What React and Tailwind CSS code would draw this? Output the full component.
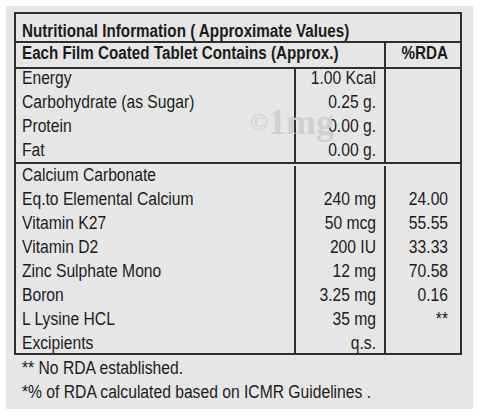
import React from 'react';

const group1 = [
    ['Energy', '1.00 Kcal', ''],
    ['Carbohydrate (as Sugar)', '0.25 g.', ''],
    ['Protein', '0.00 g.', ''],
    ['Fat', '0.00 g.', ''],
];

const group2 = [
    ['Calcium Carbonate', '', ''],
    ['Eq.to Elemental Calcium', '240 mg', '24.00'],
    ['Vitamin K27', '50 mcg', '55.55'],
    ['Vitamin D2', '200 IU', '33.33'],
    ['Zinc Sulphate Mono', '12 mg', '70.58'],
    ['Boron', '3.25 mg', '0.16'],
    ['L Lysine HCL', '35 mg', '**'],
    ['Excipients', 'q.s.', ''],
];

// narrow text: Arial-width font squeezed to an Arial Narrow look
const N = ({ children, right, bold }) => (
    <span
        className={`inline-block whitespace-nowrap ${bold ? 'font-bold scale-x-[0.845]' : 'scale-x-[0.87]'} ${right ? 'origin-right' : 'origin-left'}`}
    >
        {children}
    </span>
);

const Group = ({ rows, className }) => (
    <div className={`flex ${className}`}>
        <div className="w-[278px] pl-[6px]">
            {rows.map((r) => (
                <div key={r[0]} className="h-[24px]"><N>{r[0]}</N></div>
            ))}
        </div>
        <div className="w-[90px] border-l-2 border-[#2e2e2e] pr-[8px] text-right">
            {rows.map((r) => (
                <div key={r[0]} className="h-[24px]"><N right>{r[1]}</N></div>
            ))}
        </div>
        <div className="flex-1 border-l-2 border-[#2e2e2e] pr-[12px] text-right">
            {rows.map((r) => (
                <div key={r[0]} className="h-[24px]"><N right>{r[2]}</N></div>
            ))}
        </div>
    </div>
);

const App = () => {
    return (
        <div className="w-[480px] h-[416px] bg-white pt-[6px] pl-[6px]">
            <div className="relative w-[467px] h-[403px] bg-[#e6e6e6] pt-[6px] pl-[8px] text-[18px] leading-[18px] text-[#1c1c1c] font-['Liberation_Sans',Arial,sans-serif]">
                {/* ── table ─────────────────── */}
                <div className="w-[448px] border-2 border-[#2e2e2e]">
                    <div className="h-[29px] pt-[8px] pl-[6px] border-b-2 border-[#2e2e2e]">
                        <N bold>Nutritional Information ( Approximate Values)</N>
                    </div>
                    <div className="flex h-[26px] border-b-2 border-[#2e2e2e]">
                        <div className="w-[368px] pt-[1px] pl-[6px]">
                            <N bold>Each Film Coated Tablet Contains (Approx.)</N>
                        </div>
                        <div className="flex-1 border-l-2 border-[#2e2e2e] pt-[1px] pr-[12px] text-right">
                            <N bold right>%RDA</N>
                        </div>
                    </div>
                    <Group rows={group1} className="h-[95px] border-b-2 border-[#2e2e2e]" />
                    <Group rows={group2} className="h-[189px] pt-[2px] overflow-visible" />
                </div>

                {/* ── footnotes ─────────────── */}
                <div className="mt-[1px] pl-[8px] leading-[24px]">
                    <div><N>** No RDA established.</N></div>
                    <div><N>*% of RDA calculated based on ICMR Guidelines .</N></div>
                </div>

                {/* watermark */}
                <div className="absolute left-[244px] top-[98px] text-[36px] leading-[36px] font-bold text-[#d0d0d0] font-['Liberation_Serif',serif] pointer-events-none">
                    <span className="text-[24px] align-[4px]">©</span>1mg
                </div>
            </div>
        </div>
    );
};

export default App;
